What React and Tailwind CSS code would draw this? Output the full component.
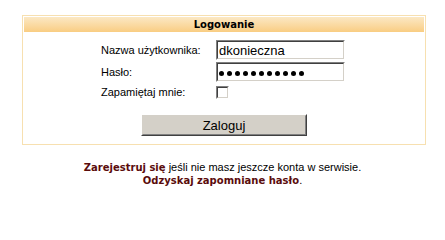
export default function App() {
  const sans = { fontFamily: '"Liberation Sans", Arial, sans-serif' };
  return (
    <div className="w-[445px] h-[202px] bg-white pt-[15px] text-black" style={sans}>
      <div className="ml-[22px] w-[404px] border border-[#f7e0b0] p-px">
        <div className="h-[15px] bg-gradient-to-b from-[#fbe8c4] to-[#f9cd82] flex items-center justify-center">
          <span className="font-['DejaVu_Sans',sans-serif] font-bold text-[10px] leading-none text-black">Logowanie</span>
        </div>
        <div className="pt-[8px] pl-[77px] grid grid-cols-[115px_129px] gap-y-[2px] text-[11px]">
          <div className="flex items-center h-[20px]">Nazwa użytkownika:</div>
          <Field>
            <span className="text-[13px] leading-none pl-px">dkonieczna</span>
          </Field>
          <div className="flex items-center h-[20px]">Hasło:</div>
          <Field>
            <div className="flex gap-[3px] pl-px pt-[3px]">
              {Array.from({ length: 11 }).map((_, i) => (
                <div key={i} className="w-[5px] h-[5px] rounded-full bg-black" />
              ))}
            </div>
          </Field>
          <div className="flex items-center h-[17px]">Zapamiętaj mnie:</div>
          <div className="flex items-center h-[17px]">
            <div className="w-[13px] h-[13px] border-t border-l border-[#808080] border-b border-r border-b-[#ffffff] border-r-[#ffffff]">
              <div className="w-full h-full bg-white border-t border-l border-[#404040] border-b border-r border-b-[#d4d0c8] border-r-[#d4d0c8]" />
            </div>
          </div>
        </div>
        <div className="flex justify-center pt-[13px] pb-[7px]">
          <div className="w-[166px] h-[22px] border-t border-l border-white border-b border-r border-b-[#404040] border-r-[#404040]">
            <div className="w-full h-full bg-[#d4d0c8] border-t border-l border-[#d4d0c8] border-b border-r border-b-[#808080] border-r-[#808080] flex items-center justify-center text-[13px] leading-none">
              Zaloguj
            </div>
          </div>
        </div>
      </div>
      <div className="pt-[16px] text-center text-[11px] leading-[13px]">
        <div>
          <a className="font-['DejaVu_Sans',sans-serif] font-bold text-[10px] text-[#5a0c0c]">Zarejestruj się</a> jeśli nie masz jeszcze konta w serwisie.
        </div>
        <div>
          <a className="font-['DejaVu_Sans',sans-serif] font-bold text-[10px] text-[#5a0c0c]">Odzyskaj zapomniane hasło</a>.
        </div>
      </div>
    </div>
  );
}

function Field({ children }) {
  return (
    <div className="h-[20px] w-[129px] border-t border-l border-[#808080] border-b border-r border-b-white border-r-white">
      <div className="w-full h-full bg-white border-t border-l border-[#404040] border-b border-r border-b-[#d4d0c8] border-r-[#d4d0c8] flex items-center">
        {children}
      </div>
    </div>
  );
}
